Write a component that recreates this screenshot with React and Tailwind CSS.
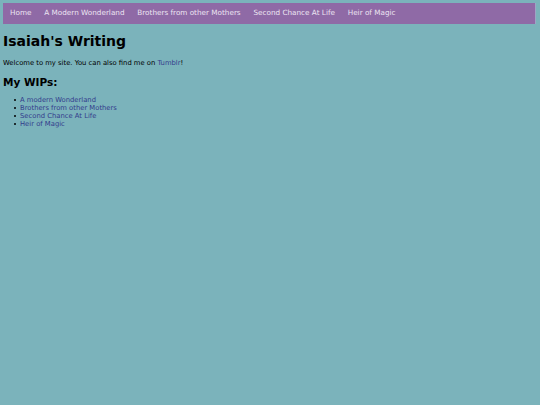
export default function App() {
  const nav = ['Home', 'A Modern Wonderland', 'Brothers from other Mothers', 'Second Chance At Life', 'Heir of Magic']
  const wips = ['A modern Wonderland', 'Brothers from other Mothers', 'Second Chance At Life', 'Heir of Magic']
  return (
    <div className="min-h-screen bg-[#7bb3bb] p-[3px] text-[6.8px] text-black" style={{ fontFamily: '"DejaVu Sans", sans-serif' }}>
      <nav className="flex h-[21px] w-[533px] items-center border-r border-[#9fa4c4] bg-[#8f6aa6] px-[0.7px]">
        {nav.map(n => (
          <a key={n} className="px-[6.4px] text-[7.25px] text-[#ece4f2]">{n}</a>
        ))}
      </nav>
      <h1 className="mt-[9px] text-[14px] leading-[17px] font-bold">Isaiah's Writing</h1>
      <p className="mt-[9px] leading-[8px]">
        Welcome to my site. You can also find me on <a className="text-[#333c8c]">Tumblr</a>!
      </p>
      <h2 className="mt-[9px] text-[10.5px] leading-[13px] font-bold">My WIPs:</h2>
      <ul className="mt-[6.5px] leading-[8.2px]">
        {wips.map(w => (
          <li key={w} className="flex items-center text-[#333c8c]">
            <span className="mr-[4px] ml-[11px] h-[2px] w-[2px] rounded-full bg-black" />
            {w}
          </li>
        ))}
      </ul>
    </div>
  )
}
